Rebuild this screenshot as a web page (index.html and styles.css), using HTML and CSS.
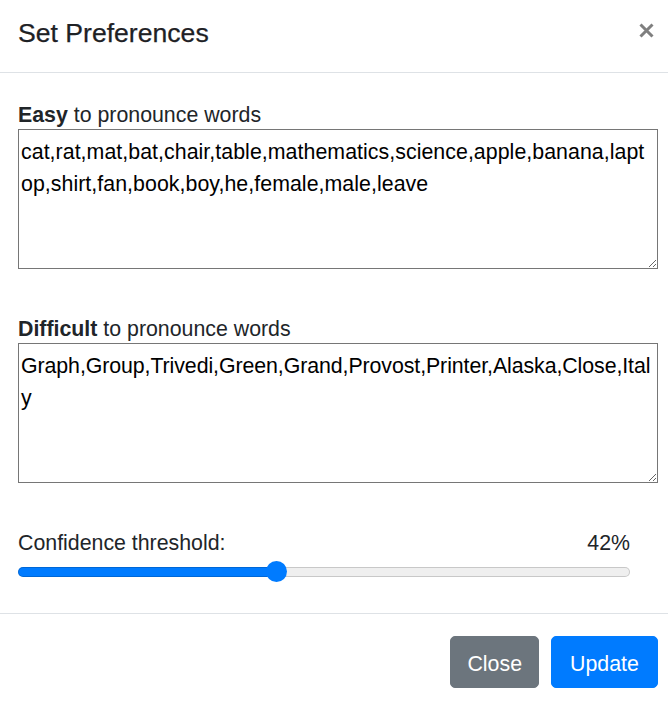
FILE: index.html
```html
<!DOCTYPE html>
<html lang="en">
<head>
<meta charset="utf-8">
<title>Set Preferences</title>
<link rel="stylesheet" href="styles.css">
</head>
<body>
<div class="modal">
  <div class="modal-header">
    <h5 class="modal-title">Set Preferences</h5>
    <button class="close" type="button" aria-label="Close">
      <svg width="15" height="15" viewBox="0 0 15 15"><path d="M1.5 1.5 L13.5 13.5 M13.5 1.5 L1.5 13.5" stroke="#7f7f7f" stroke-width="3" stroke-linecap="butt"/></svg>
    </button>
  </div>
  <div class="modal-body">
    <div class="field">
      <label class="field-label" for="easy"><strong>Easy</strong> to pronounce words</label>
      <textarea id="easy" class="words words-easy" rows="4">cat,rat,mat,bat,chair,table,mathematics,science,apple,banana,laptop,shirt,fan,book,boy,he,female,male,leave</textarea>
    </div>
    <div class="field">
      <label class="field-label" for="difficult"><strong>Difficult</strong> to pronounce words</label>
      <textarea id="difficult" class="words words-difficult" rows="4">Graph,Group,Trivedi,Green,Grand,Provost,Printer,Alaska,Close,Italy</textarea>
    </div>
    <div class="threshold">
      <div class="threshold-head">
        <span>Confidence threshold:</span>
        <span>42%</span>
      </div>
      <input class="range" type="range" min="0" max="100" value="42" style="--val:0.42">
    </div>
  </div>
  <div class="modal-footer">
    <button class="btn btn-secondary" type="button">Close</button>
    <button class="btn btn-primary" type="button">Update</button>
  </div>
</div>
</body>
</html>
```
FILE: styles.css
```css
* { box-sizing: border-box; }
html, body { margin: 0; padding: 0; background: #fff; }
body {
  font-family: "Liberation Sans", Arial, sans-serif;
  font-size: 21.33px;
  line-height: 32px;
  color: #212529;
}
.modal { width: 668px; }
.modal-header {
  display: flex;
  justify-content: space-between;
  align-items: flex-start;
  padding: 13px 14px 19px 18px;
  border-bottom: 1px solid #dee2e6;
}
.modal-title {
  margin: 0;
  font-size: 26.6px;
  font-weight: 500;
  line-height: 40px;
  color: #1e2125;
  -webkit-text-stroke: 0.25px #1e2125;
}
.close {
  border: 0;
  background: transparent;
  padding: 0;
  margin-top: 10px;
  width: 15px;
  height: 15px;
  display: block;
  cursor: pointer;
}
.close svg { display: block; }
.modal-body {
  padding: 24px 10px 31px 18px;
}
.field { margin-bottom: 42px; }
.field-label { display: block; height: 32px; padding-top: 2px; }
.field-label strong { font-weight: 700; }
.words {
  display: block;
  width: 100%;
  height: 140px;
  margin: 0;
  padding: 6px 2px 2px;
  border: 1px solid #767676;
  border-radius: 0;
  font-family: "Liberation Sans", Arial, sans-serif;
  font-size: 21.33px;
  line-height: 32px;
  color: #000;
  background: #fff;
  resize: both;
  overflow: hidden;
}
.words-easy { letter-spacing: 0.05px; }
.words-difficult { letter-spacing: -0.08px; }
.threshold { margin-right: 28px; }
.threshold-head {
  display: flex;
  justify-content: space-between;
  height: 32px;
  padding-top: 2px;
  margin-bottom: 4px;
}
.range {
  -webkit-appearance: none;
  appearance: none;
  display: block;
  width: 100%;
  height: 21px;
  margin: 0;
  padding: 0;
  background: transparent;
}
.range::-webkit-slider-runnable-track {
  height: 10px;
  border-radius: 5px;
  background: linear-gradient(to right, #007bff calc(10.5px + var(--val) * (100% - 21px)), #efefef 0);
  box-shadow: inset 0 0 0 1px rgba(0, 0, 0, 0.16);
}
.range::-webkit-slider-thumb {
  -webkit-appearance: none;
  appearance: none;
  width: 21px;
  height: 21px;
  margin-top: -5.5px;
  border: 0;
  border-radius: 50%;
  background: #007bff;
}
.modal-footer {
  display: flex;
  justify-content: flex-end;
  gap: 12px;
  padding: 22px 10px 14px 18px;
  border-top: 1px solid #dee2e6;
}
.btn {
  height: 52px;
  padding: 3px 16px 0;
  border: 1px solid transparent;
  border-radius: 5px;
  font-family: "Liberation Sans", Arial, sans-serif;
  font-size: 21.33px;
  line-height: 32px;
  color: #fff;
}
.btn-secondary { background: #6c757d; border-color: #6c757d; min-width: 87px; }
.btn-primary { background: #007bff; border-color: #007bff; min-width: 107px; }
```
